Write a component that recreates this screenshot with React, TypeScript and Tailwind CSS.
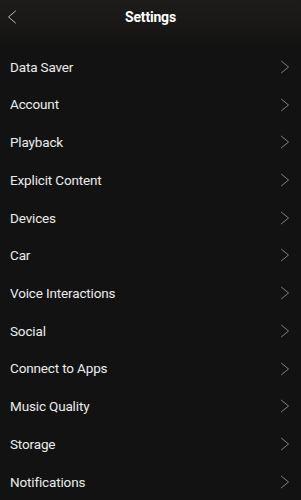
const items = [
  "Data Saver",
  "Account",
  "Playback",
  "Explicit Content",
  "Devices",
  "Car",
  "Voice Interactions",
  "Social",
  "Connect to Apps",
  "Music Quality",
  "Storage",
  "Notifications",
];

function Chevron({ left = false, className = "" }: { left?: boolean; className?: string }) {
  return (
    <svg viewBox="0 0 10 14" className={className} fill="none" stroke="currentColor" strokeWidth={1} strokeLinecap="round" strokeLinejoin="round">
      {left ? <path d="M8.5 1 L1.5 7 L8.5 13" /> : <path d="M1.5 1.25 L8.5 7 L1.5 12.75" />}
    </svg>
  );
}

export default function App() {
  return (
    <div
      className="w-[301px] h-[500px] overflow-hidden bg-[#121212] text-[#ececec]"
      style={{ fontFamily: "Roboto, 'Liberation Sans', sans-serif" }}
    >
      <div className="relative h-[34px] flex items-center justify-center bg-gradient-to-b from-[#1e1c1b] to-[#171615]">
        <Chevron left className="absolute left-[7px] top-[10px] w-[10px] h-[14px] text-[#b8b8b8]" />
        <h1 className="text-[14px] font-bold text-white tracking-[-0.2px] pt-[1px]">Settings</h1>
      </div>
      <div className="h-[14px] bg-gradient-to-b from-[#171615] to-[#121212]" />
      <ul>
        {items.map((name) => (
          <li key={name} className="h-[37.73px] flex items-center justify-between pl-[10px] pr-[11px]">
            <span className="text-[13.5px] font-normal tracking-[-0.15px]">{name}</span>
            <Chevron className="w-[10px] h-[14px] text-[#7f7f7f]" />
          </li>
        ))}
      </ul>
    </div>
  );
}
